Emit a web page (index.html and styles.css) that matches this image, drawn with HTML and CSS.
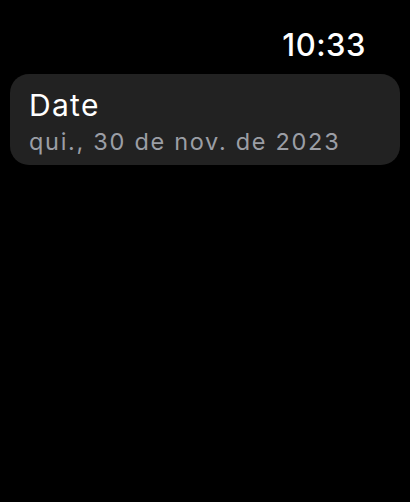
FILE: index.html
```html
<!DOCTYPE html>
<html>
<head>
<meta charset="utf-8">
<link rel="stylesheet" href="styles.css">
</head>
<body>
<div class="screen">
  <div class="status"><span class="time">10:33</span></div>
  <div class="card">
    <div class="title">Date</div>
    <div class="subtitle">qui., 30 de nov. de 2023</div>
  </div>
</div>
</body>
</html>
```
FILE: styles.css
```css
html, body {
  margin: 0;
  padding: 0;
  background: #000;
}
.screen {
  width: 410px;
  height: 502px;
  background: #000;
  font-family: Inter, "Noto Sans", sans-serif;
  color: #fff;
  display: flex;
  flex-direction: column;
}
.status {
  display: flex;
  justify-content: flex-end;
  padding: 26px 44px 0 0;
  height: 48px;
  box-sizing: border-box;
}
.time {
  font-size: 31px;
  font-weight: 500;
  line-height: 38px;
  letter-spacing: 0.5px;
}
.card {
  margin: 26px 10px 0 10px;
  height: 91px;
  box-sizing: border-box;
  background: #222222;
  border-radius: 19px;
  padding: 14px 19px 0 19px;
}
.title {
  font-size: 30px;
  line-height: 34px;
  font-weight: 400;
  letter-spacing: 1.3px;
}
.subtitle {
  font-size: 23.5px;
  line-height: 30px;
  color: #9b9ea5;
  margin-top: 5px;
  letter-spacing: 1.7px;
}
```
